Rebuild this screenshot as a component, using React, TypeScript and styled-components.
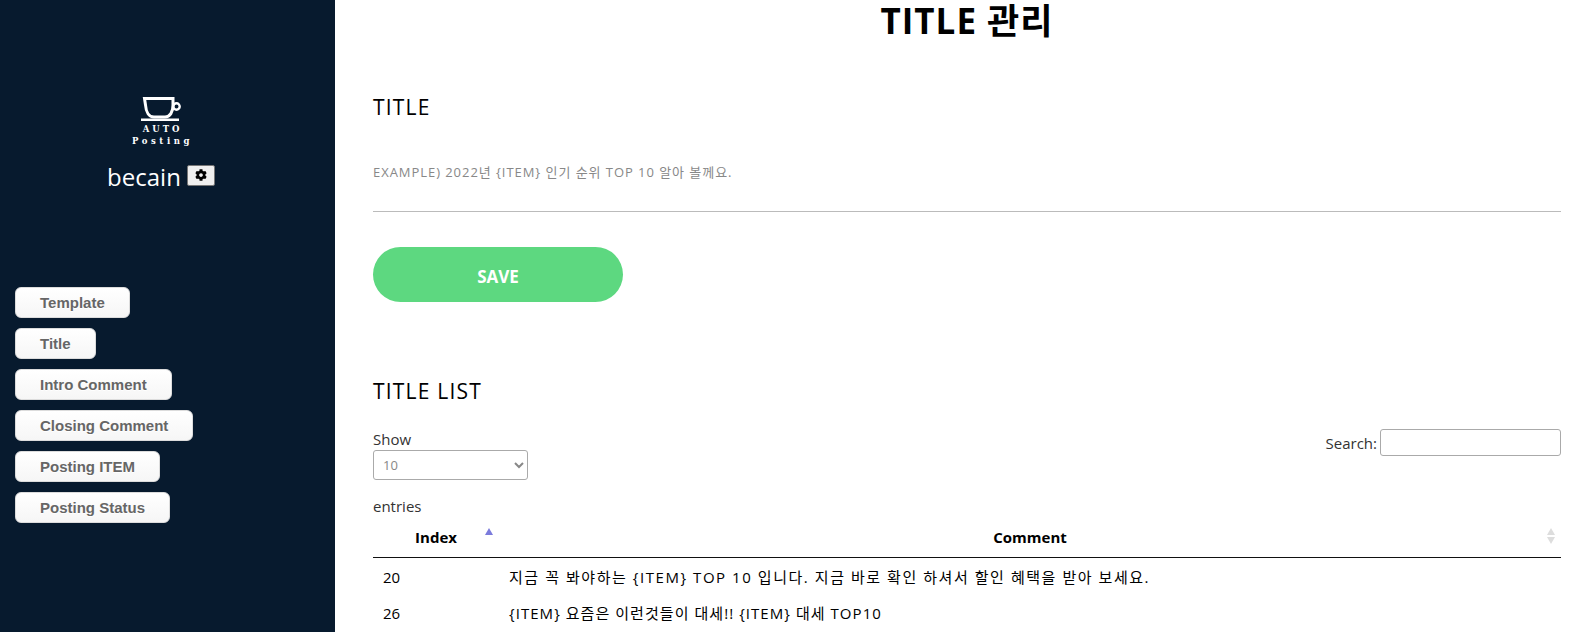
import styled, { createGlobalStyle } from "styled-components";
import { FaCog } from "react-icons/fa";

const menuItems = [
  "Template",
  "Title",
  "Intro Comment",
  "Closing Comment",
  "Posting ITEM",
  "Posting Status",
];

const titleRows = [
  {
    index: 20,
    tracking: 1.55,
    comment:
      "지금 꼭 봐야하는 {ITEM} TOP 10 입니다. 지금 바로 확인 하셔서 할인 혜택을 받아 보세요.",
  },
  {
    index: 26,
    tracking: 1.05,
    comment: "{ITEM} 요즘은 이런것들이 대세!! {ITEM} 대세 TOP10",
  },
];

const GlobalStyle = createGlobalStyle`
  html, body {
    margin: 0;
    padding: 0;
    height: 100%;
    overflow: hidden;
    background: #fff;
  }
  * {
    box-sizing: border-box;
  }
`;

const Shell = styled.div`
  display: flex;
  height: 100vh;
  overflow: hidden;
  font-family: "Open Sans", "Noto Sans CJK KR", sans-serif;
`;

const Sidebar = styled.aside`
  flex: 0 0 335px;
  background: #071a2e;
  display: flex;
  flex-direction: column;
  padding: 97px 28px 0 15px;
`;

const Brand = styled.div`
  display: flex;
  flex-direction: column;
  align-items: center;
  color: #fff;
`;

const LogoLine = styled.span<{ $spacing: number }>`
  padding-left: 3px;
  font-family: "DejaVu Serif", serif;
  font-weight: 700;
  font-size: 8.5px;
  line-height: 12px;
  letter-spacing: ${(props) => props.$spacing}px;

  &:first-of-type {
    margin-top: 2px;
  }
`;

const UserRow = styled.div`
  display: flex;
  align-items: center;
  gap: 6px;
  margin-top: 11px;
  font-size: 24px;
`;

const UserName = styled.span`
  margin-top: 4px;
  line-height: 30px;
`;

const GearButton = styled.button`
  width: 28px;
  height: 21px;
  padding: 0;
  display: flex;
  align-items: center;
  justify-content: center;
  background: #efefef;
  border: 1px solid #767676;
  border-radius: 2px;
  color: #000;
  font-size: 12px;
`;

const Menu = styled.nav`
  display: flex;
  flex-direction: column;
  align-items: flex-start;
  gap: 10px;
  margin-top: 95px;
`;

const MenuButton = styled.button`
  height: 31px;
  padding: 0 24px;
  background: linear-gradient(#ffffff, #f6f6f6);
  border: 1px solid #dcdcdc;
  border-radius: 6px;
  color: #666;
  font-family: "Liberation Sans", Arial, sans-serif;
  font-weight: 700;
  font-size: 15px;
  text-shadow: 0 1px 0 #fff;
`;

const Main = styled.main`
  flex: 1;
  min-width: 0;
  padding: 0 14px 0 38px;
  color: #000;
`;

const PageTitle = styled.h1`
  margin: 0;
  text-align: center;
  font-size: 35px;
  line-height: 42px;
  font-weight: 700;
  letter-spacing: 1px;
`;

const SectionTitle = styled.h2`
  margin: 0;
  font-size: 21px;
  line-height: 30px;
  font-weight: 400;
  letter-spacing: 1.2px;
`;

const TitleField = styled.div`
  margin-top: 50px;
`;

const Example = styled.p`
  margin: 40px 0 0;
  padding-bottom: 29px;
  border-bottom: 1px solid #bbb;
  font-size: 13px;
  line-height: 20px;
  color: #888;
  letter-spacing: 0.95px;
`;

const SaveButton = styled.button`
  display: block;
  width: 250px;
  height: 55px;
  margin-top: 35px;
  padding-top: 5px;
  border: none;
  border-radius: 28px;
  background: #5dd880;
  color: #fff;
  font-family: inherit;
  font-size: 17px;
  font-weight: 700;
`;

const ListSection = styled.section`
  margin-top: 74px;
`;

const Controls = styled.div`
  display: flex;
  justify-content: space-between;
  align-items: flex-start;
  margin-top: 22px;
  font-size: 15px;
  color: #333;
`;

const LengthLabel = styled.label`
  display: flex;
  flex-direction: column;
  align-items: flex-start;
  line-height: 22px;
`;

const LengthSelect = styled.select`
  width: 155px;
  height: 30px;
  padding: 0 5px;
  margin-bottom: 15px;
  background: #fff;
  border: 1px solid #aaa;
  border-radius: 3px;
  color: #888;
  font-family: inherit;
  font-size: 13px;
`;

const SearchLabel = styled.label`
  display: flex;
  align-items: center;
  gap: 3px;
  margin-top: 1px;
`;

const SearchInput = styled.input`
  width: 181px;
  height: 27px;
  border: 1px solid #aaa;
  border-radius: 3px;
  background: #fff;
`;

const Table = styled.table`
  width: 100%;
  border-collapse: collapse;
  table-layout: fixed;
  margin-top: 2px;
  font-size: 15px;
`;

const HeadCell = styled.th<{ $sorted?: boolean; $width?: number }>`
  position: relative;
  width: ${(props) => (props.$width ? `${props.$width}px` : "auto")};
  height: 38px;
  padding: 0 18px 2px;
  border-bottom: 1px solid #111;
  font-weight: 700;
  text-align: center;

  &::before,
  &::after {
    content: "";
    position: absolute;
    right: 6px;
    border-left: 4.5px solid transparent;
    border-right: 4.5px solid transparent;
  }

  &::before {
    top: 9px;
    border-bottom: 7px solid ${(props) => (props.$sorted ? "#7b7bdc" : "#ddd")};
  }

  &::after {
    top: 18px;
    border-top: 7px solid #ddd;
    display: ${(props) => (props.$sorted ? "none" : "block")};
  }
`;

const BodyRow = styled.tr`
  &:first-child td {
    padding-top: 2px;
  }
`;

const Cell = styled.td<{ $tracking?: number }>`
  height: 37px;
  padding: 0 10px;
  letter-spacing: ${(props) => props.$tracking ?? 0}px;
`;

const CupLogo = () => (
  <svg width="40" height="24" viewBox="0 0 40 24" fill="none" stroke="#fff">
    <path
      d="M3.5 1.5H32V8C32 15 29 20 24 20H13C8 20 5 15 4.5 8Z"
      strokeWidth="3"
    />
    <circle cx="35.5" cy="9.5" r="3.2" strokeWidth="2.4" />
    <path d="M0 22.8H38" strokeWidth="2.4" />
  </svg>
);

export default function App() {
  return (
    <>
      <GlobalStyle />
      <Shell>
        <Sidebar>
          <Brand>
            <CupLogo />
            <LogoLine $spacing={3}>AUTO</LogoLine>
            <LogoLine $spacing={3.6}>Posting</LogoLine>
            <UserRow>
              <UserName>becain</UserName>
              <GearButton aria-label="settings">
                <FaCog />
              </GearButton>
            </UserRow>
          </Brand>
          <Menu>
            {menuItems.map((item) => (
              <MenuButton key={item}>{item}</MenuButton>
            ))}
          </Menu>
        </Sidebar>
        <Main>
          <PageTitle>TITLE 관리</PageTitle>
          <TitleField>
            <SectionTitle>TITLE</SectionTitle>
            <Example>EXAMPLE) 2022년 {"{ITEM}"} 인기 순위 TOP 10 알아 볼께요.</Example>
          </TitleField>
          <SaveButton>SAVE</SaveButton>
          <ListSection>
            <SectionTitle>TITLE LIST</SectionTitle>
            <Controls>
              <LengthLabel>
                Show
                <LengthSelect defaultValue="10">
                  <option value="10">10</option>
                  <option value="25">25</option>
                  <option value="50">50</option>
                </LengthSelect>
                entries
              </LengthLabel>
              <SearchLabel>
                Search:
                <SearchInput type="search" />
              </SearchLabel>
            </Controls>
            <Table>
              <thead>
                <tr>
                  <HeadCell $sorted $width={126}>
                    Index
                  </HeadCell>
                  <HeadCell>Comment</HeadCell>
                </tr>
              </thead>
              <tbody>
                {titleRows.map((row) => (
                  <BodyRow key={row.index}>
                    <Cell>{row.index}</Cell>
                    <Cell $tracking={row.tracking}>{row.comment}</Cell>
                  </BodyRow>
                ))}
              </tbody>
            </Table>
          </ListSection>
        </Main>
      </Shell>
    </>
  );
}
